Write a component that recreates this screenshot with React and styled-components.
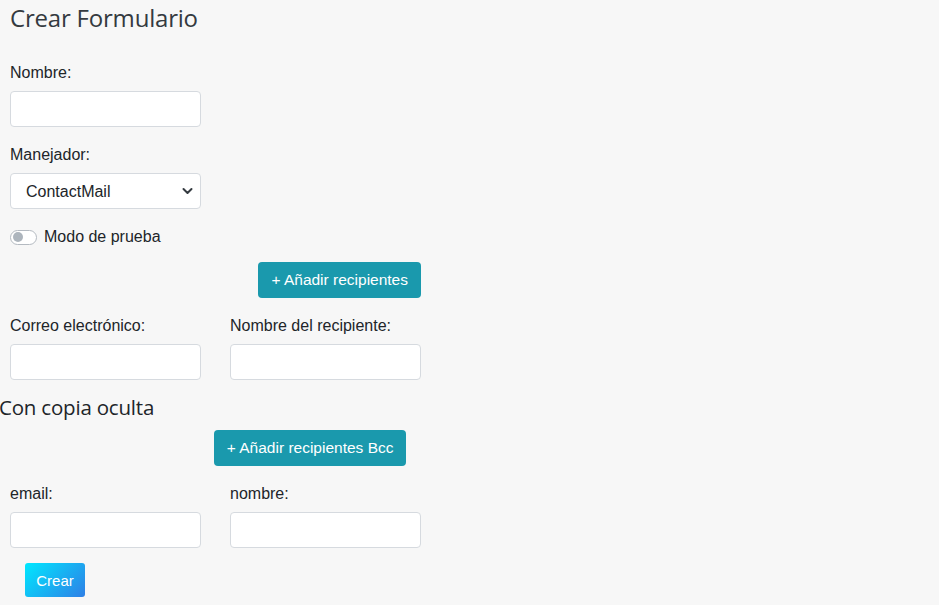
import React from 'react';
import styled, { createGlobalStyle } from 'styled-components';

const GlobalStyle = createGlobalStyle`
  html, body {
    margin: 0;
    padding: 0;
    background: #f7f7f7;
  }

  body {
    font-family: "Liberation Sans", Arial, sans-serif;
    font-size: 16px;
    color: #212529;
  }
`;

const Page = styled.div`
  width: 411px;
  padding: 0 10px 8px;
`;

const Title = styled.h2`
  margin: 0 0 28px;
  padding-top: 3px;
  font-family: "Open Sans", sans-serif;
  font-weight: 400;
  font-size: 24px;
  line-height: 30px;
  color: #343a40;
  letter-spacing: -0.2px;
`;

const SubTitle = styled.h4`
  margin: 13px 0 9px -11px;
  font-family: "Open Sans", sans-serif;
  font-weight: 400;
  font-size: 20.5px;
  line-height: 28px;
  color: #212529;
  letter-spacing: -0.2px;
`;

const Group = styled.div`
  display: flex;
  flex-direction: column;
  width: ${(p) => p.width || '191px'};
  margin-bottom: ${(p) => p.mb || '16px'};
`;

const Label = styled.label`
  line-height: 24px;
  margin-bottom: 6px;
`;

const Input = styled.input`
  box-sizing: border-box;
  width: 100%;
  height: 36px;
  border: 1px solid #d6dadf;
  border-radius: 4px;
  background: #fff;
  padding: 0 12px;
  font: inherit;
`;

const SelectWrap = styled.div`
  position: relative;
`;

const Select = styled.select`
  box-sizing: border-box;
  width: 100%;
  height: 36px;
  border: 1px solid #d6dadf;
  border-radius: 4px;
  background: #fff;
  padding: 0 30px 0 15px;
  font: inherit;
  color: #212529;
  appearance: none;
  -webkit-appearance: none;
`;

const Chevron = styled.svg`
  position: absolute;
  right: 8px;
  top: 14px;
  pointer-events: none;
`;

const SwitchRow = styled.label`
  display: flex;
  align-items: center;
  gap: 7px;
  line-height: 24px;
  margin-bottom: 13px;
`;

const Track = styled.span`
  box-sizing: border-box;
  width: 27px;
  height: 15px;
  border: 1px solid #b4bac1;
  border-radius: 8px;
  background: #fff;
  display: flex;
  align-items: center;
  padding-left: 2px;
`;

const Knob = styled.span`
  width: 10px;
  height: 10px;
  border-radius: 50%;
  background: #adb5bd;
`;

const ActionRow = styled.div`
  display: flex;
  justify-content: flex-end;
  padding-right: ${(p) => p.pr || '0'};
  margin-bottom: ${(p) => p.mb || '16px'};
`;

const InfoButton = styled.button`
  height: 36px;
  padding: 0 ${(p) => p.px || '13px'};
  border: 0;
  border-radius: 4px;
  background: #1a99ad;
  color: #fff;
  font: inherit;
  font-size: 15.5px;
  cursor: pointer;
`;

const Row = styled.div`
  display: flex;
  gap: 29px;
`;

const SubmitButton = styled.button`
  margin-left: 15px;
  height: 34px;
  width: 60px;
  border: 0;
  border-radius: 3px;
  background: linear-gradient(135deg, #00e8ff 0%, #2f7fe6 100%);
  color: #fff;
  font: inherit;
  font-size: 15px;
  cursor: pointer;
`;

export default function App() {
  return (
    <>
      <GlobalStyle />
      <Page>
        <Title>Crear Formulario</Title>

        <Group>
          <Label>Nombre:</Label>
          <Input type="text" />
        </Group>

        <Group>
          <Label>Manejador:</Label>
          <SelectWrap>
            <Select defaultValue="ContactMail">
              <option>ContactMail</option>
            </Select>
            <Chevron width="11" height="8" viewBox="0 0 11 8">
              <path d="M1.5 2l4 4 4-4" fill="none" stroke="#343a40" strokeWidth="2" strokeLinecap="round" strokeLinejoin="round" />
            </Chevron>
          </SelectWrap>
        </Group>

        <SwitchRow>
          <Track>
            <Knob />
          </Track>
          Modo de prueba
        </SwitchRow>

        <ActionRow>
          <InfoButton>+ Añadir recipientes</InfoButton>
        </ActionRow>

        <Row>
          <Group mb="0">
            <Label>Correo electrónico:</Label>
            <Input type="email" />
          </Group>
          <Group mb="0">
            <Label>Nombre del recipiente:</Label>
            <Input type="text" />
          </Group>
        </Row>

        <SubTitle>Con copia oculta</SubTitle>

        <ActionRow pr="15px">
          <InfoButton px="12.5px">+ Añadir recipientes Bcc</InfoButton>
        </ActionRow>

        <Row>
          <Group mb="15px">
            <Label>email:</Label>
            <Input type="email" />
          </Group>
          <Group mb="15px">
            <Label>nombre:</Label>
            <Input type="text" />
          </Group>
        </Row>

        <SubmitButton>Crear</SubmitButton>
      </Page>
    </>
  );
}
